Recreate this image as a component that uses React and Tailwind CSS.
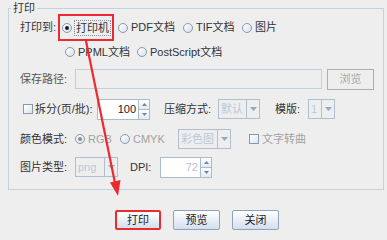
import React from 'react';

const Radio = ({ checked, disabled }) => (
  <span className="w-[10px] h-[10px] rounded-full border border-[#8799ac] bg-gradient-to-br from-white to-[#d6e1ec] flex items-center justify-center shrink-0">
    {checked && (
      <span className={`w-[4px] h-[4px] rounded-full ${disabled ? 'bg-[#8d8d8d]' : 'bg-[#1c1c1c]'}`} />
    )}
  </span>
);

const Check = () => (
  <span className="w-[10px] h-[10px] border border-[#8799ac] bg-gradient-to-br from-white to-[#dde6ef] shrink-0" />
);

const Option = ({ w, label, checked, disabled }) => (
  <span className={`flex items-center shrink-0 whitespace-nowrap ${w}`}>
    <Radio checked={checked} disabled={disabled} />
    <span className={`ml-[3px] ${disabled ? 'text-[#a3a3a3]' : ''}`}>{label}</span>
  </span>
);

const Tri = ({ up }) => (
  <svg width="5" height="3" viewBox="0 0 5 3">
    <path d={up ? 'M0 3 L2.5 0 L5 3 Z' : 'M0 0 L5 0 L2.5 3 Z'} fill="#6f86a0" />
  </svg>
);

const Spinner = ({ w, value, faded }) => (
  <span className={`flex h-[21px] shrink-0 ${w}`}>
    <span className={`flex-1 bg-white border border-[#a9bccd] flex items-center justify-end pr-[2px] ${faded ? 'text-[#b4c3d2]' : 'text-[#222]'}`}>
      {value}
    </span>
    <span className="w-[11px] flex flex-col">
      <span className="flex-1 border border-l-0 border-[#a9bccd] bg-gradient-to-b from-white to-[#e3eaf2] flex items-center justify-center">
        <Tri up />
      </span>
      <span className="flex-1 border border-l-0 border-t-0 border-[#a9bccd] bg-gradient-to-b from-white to-[#e3eaf2] flex items-center justify-center">
        <Tri />
      </span>
    </span>
  </span>
);

const Combo = ({ w, value }) => (
  <span className={`flex h-[20px] shrink-0 border border-[#aebfd0] whitespace-nowrap ${w}`}>
    <span className="flex-1 flex items-center pl-[2px] text-[#b9c9d9] bg-[#eeeeee]">{value}</span>
    <span className="w-[13px] border-l border-[#aebfd0] flex items-center justify-center">
      <svg width="7" height="4" viewBox="0 0 7 4">
        <path d="M0 0 L7 0 L3.5 4 Z" fill="#93aac2" />
      </svg>
    </span>
  </span>
);

const Btn = ({ children, red }) => (
  <button
    className={`h-[20px] flex items-center justify-center rounded-[2px] bg-gradient-to-b from-white to-[#d3dfed] text-[#222] ${
      red ? 'w-[46px] border-2 border-[#ec2a2f]' : 'w-[47px] border border-[#8ea3ba]'
    }`}
  >
    {children}
  </button>
);

export default function App() {
  return (
    <div className="relative w-[387px] h-[240px] overflow-hidden bg-[#eeeeee] text-[11px] leading-[13px] text-[#333] whitespace-nowrap font-['Liberation_Sans','Noto_Sans_CJK_SC',sans-serif]">
      <fieldset className="ml-[8px] mt-[2px] w-[376px] h-[188px] border border-[#c4d2df]">
        <legend className="ml-[2px] px-[2px] leading-[12px] text-[#333]">打印</legend>

        {/* 打印到 */}
        <div className="flex items-center h-[27px] pl-[11px]">
          <span className="w-[38px] shrink-0">打印到:</span>
          <span className="flex items-center w-[56px] h-[27px] border-2 border-[#ec2a2f] pl-[2px] shrink-0">
            <Radio checked />
            <span className="ml-[2px] px-[1px] border border-dotted border-[#7e8fa1] leading-[14px] shrink-0">打印机</span>
          </span>
          <span className="w-[4px] shrink-0" />
          <Option w="w-[65px]" label="PDF文档" />
          <Option w="w-[59px]" label="TIF文档" />
          <Option w="w-[60px]" label="图片" />
        </div>

        <div className="flex items-center h-[22px] pl-[56px]">
          <Option w="w-[72px]" label="PPML文档" />
          <Option w="w-[100px]" label="PostScript文档" />
        </div>

        {/* 保存路径 */}
        <div className="flex items-center h-[22px] mt-[5px] pl-[11px]">
          <span className="w-[55px] shrink-0 text-[#555]">保存路径:</span>
          <span className="w-[247px] h-[20px] border border-[#bcd0e2] shrink-0" />
          <span className="ml-[5px] w-[47px] h-[21px] border border-[#adadad] flex items-center justify-center text-[#a8a8a8] shrink-0">
            浏览
          </span>
        </div>

        {/* 拆分 */}
        <div className="flex items-center h-[22px] mt-[8px] pl-[14px]">
          <Check />
          <span className="ml-[2px] w-[62px] shrink-0">拆分(页/批):</span>
          <Spinner w="w-[53px]" value="100" />
          <span className="ml-[14px] w-[54px] shrink-0">压缩方式:</span>
          <Combo w="w-[42px]" value="默认" />
          <span className="ml-[15px] w-[33px] shrink-0">模版:</span>
          <Combo w="w-[27px]" value="1" />
        </div>

        {/* 颜色模式 */}
        <div className="flex items-center h-[22px] mt-[8px] pl-[11px]">
          <span className="w-[55px] shrink-0">颜色模式:</span>
          <Option w="w-[45px]" label="RGB" checked disabled />
          <Option w="w-[58px]" label="CMYK" disabled />
          <Combo w="w-[53px]" value="彩色图" />
          <span className="ml-[18px] flex items-center">
            <Check />
            <span className="ml-[3px] text-[#a3a3a3]">文字转曲</span>
          </span>
        </div>

        {/* 图片类型 */}
        <div className="flex items-center h-[22px] mt-[6px] pl-[11px]">
          <span className="w-[55px] shrink-0">图片类型:</span>
          <Combo w="w-[43px]" value="png" />
          <span className="ml-[12px] w-[30px] shrink-0">DPI:</span>
          <Spinner w="w-[52px]" value="72" faded />
        </div>
      </fieldset>

      <div className="flex items-center mt-[20px] pl-[115px] gap-[12px]">
        <Btn red>打印</Btn>
        <Btn>预览</Btn>
        <Btn>关闭</Btn>
      </div>

      {/* red annotation arrow */}
      <svg className="absolute left-0 top-0 pointer-events-none" width="387" height="240" viewBox="0 0 387 240">
        <line x1="86" y1="41" x2="115" y2="183" stroke="#ee2a2f" strokeWidth="2.2" />
        <path d="M118 196 L120.5 180 L110 182.5 Z" fill="#ee2a2f" />
      </svg>
    </div>
  );
}
